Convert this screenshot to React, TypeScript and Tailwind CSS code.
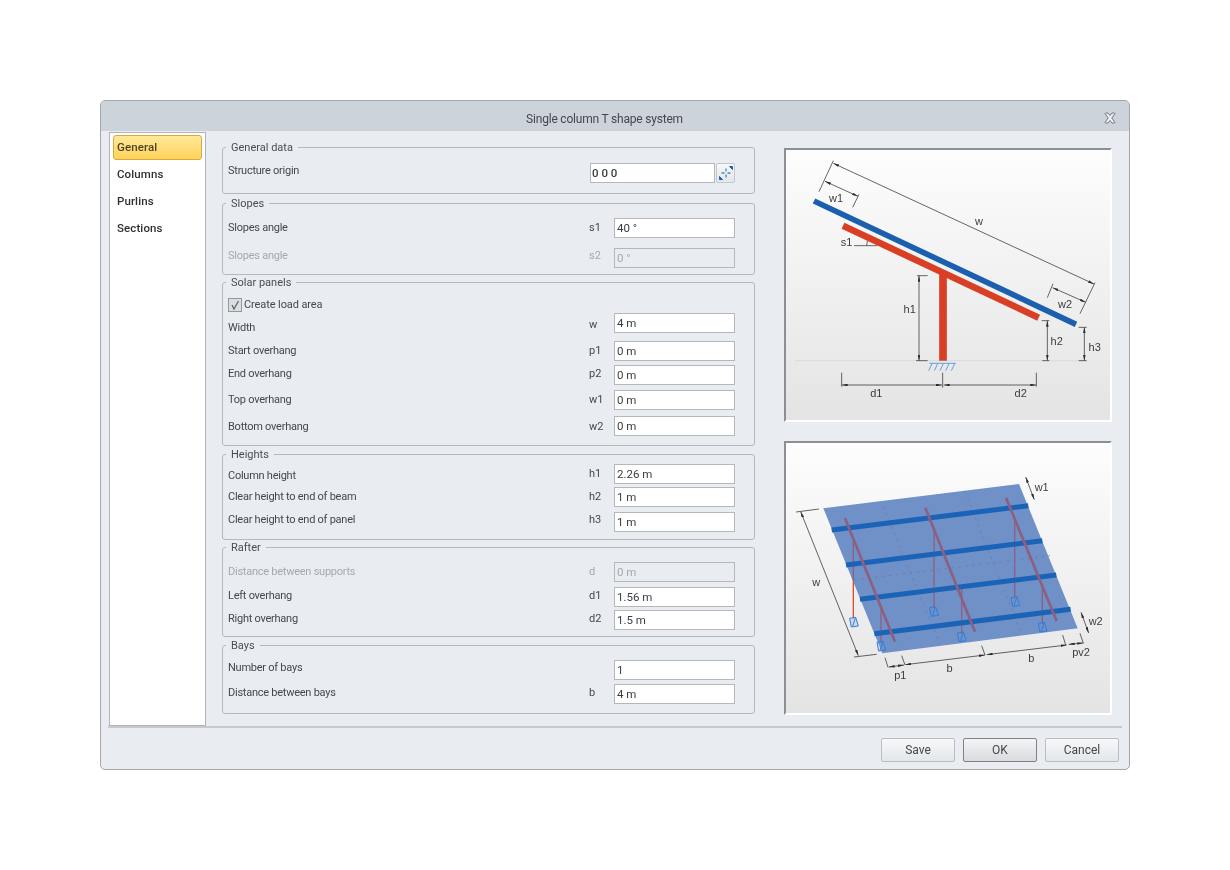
import type { ReactNode } from 'react'

const font = "font-['Roboto',sans-serif]"

interface GroupProps {
  title: string
  className: string
  children: ReactNode
}

function Group({ title, className, children }: GroupProps) {
  return (
    <div className={`relative border border-[#b4b9bf] rounded-[3px] ${className}`}>
      <span className="absolute -top-[8px] left-[3px] bg-[#e9ecf1] px-[5px] text-[11px] leading-[16px] text-[#4a4d50]">
        {title}
      </span>
      {children}
    </div>
  )
}

interface RowProps {
  label: string
  sym?: string
  value: string
  disabled?: boolean
  className: string
  labelClass?: string
  symClass?: string
}

function Row({ label, sym, value, disabled, className, labelClass = '', symClass = '' }: RowProps) {
  return (
    <div className={`flex items-center h-[20px] pl-[5px] ${className}`}>
      <span
        className={`w-[361px] text-[11px] tracking-[-0.25px] ${labelClass} ${disabled ? 'text-[#a6a9ac]' : 'text-[#45484b]'}`}
      >
        {label}
      </span>
      <span
        className={`w-[25px] text-[11px] ${symClass} ${disabled ? 'text-[#a6a9ac]' : 'text-[#45484b]'}`}
      >
        {sym}
      </span>
      <input
        readOnly
        value={value}
        className={`w-[121px] h-[20px] border border-[#b4b8bc] pl-[2px] text-[11.5px] outline-none ${disabled ? 'bg-[#e9ecf1] text-[#a6a9ac]' : 'bg-white text-[#3a3d40]'}`}
      />
    </div>
  )
}

function SideItem({ label, active }: { label: string; active?: boolean }) {
  return (
    <div
      className={`h-[25px] w-[89px] mb-[2px] flex items-center pl-[3px] text-[11.5px] font-medium tracking-[0.1px] ${active ? 'rounded-[3px] border border-[#d8a93f] bg-gradient-to-b from-[#ffe998] to-[#ffd257] text-[#4c4326]' : 'border border-transparent text-[#2d3033]'}`}
    >
      {label}
    </div>
  )
}

function FooterButton({ label, primary }: { label: string; primary?: boolean }) {
  return (
    <button
      className={`w-[74px] h-[24px] rounded-[2px] border text-[12px] text-[#45484b] bg-gradient-to-b ${primary ? 'border-[#7d8084] from-[#f3f4f5] to-[#d9dbde]' : 'border-[#b9bdc2] from-[#f7f8f9] to-[#e3e6ea]'}`}
    >
      {label}
    </button>
  )
}

function Arrows({ id }: { id: string }) {
  return (
    <defs>
      <marker id={id} viewBox="0 0 18 8" refX="18" refY="4" markerUnits="userSpaceOnUse" markerWidth="18" markerHeight="8" orient="auto-start-reverse">
        <path d="M0 0 L18 4 L0 8 Z" fill="#2c2c2c" />
      </marker>
    </defs>
  )
}

function SideDiagram() {
  const m = 'url(#a1)'
  return (
    <svg viewBox="18 165 972 810" className="block w-full h-full" fontFamily="'Liberation Sans',sans-serif" fontSize="33" fill="#3c3c3c">
      <Arrows id="a1" />
      <line x1="45" y1="797" x2="920" y2="797" stroke="#d2d2d2" strokeWidth="2" />
      <g stroke="#404040" strokeWidth="2.4" fill="none">
        <line x1="160" y1="205" x2="942" y2="567" markerStart={m} markerEnd={m} />
        <line x1="160" y1="197" x2="117" y2="290" />
        <line x1="945" y1="563" x2="900" y2="656" />
        <line x1="135" y1="259" x2="234" y2="304" markerStart={m} markerEnd={m} />
        <line x1="237" y1="298" x2="218" y2="337" />
        <line x1="819" y1="566" x2="802" y2="608" />
        <line x1="818" y1="578" x2="917" y2="622" markerStart={m} markerEnd={m} />
        <line x1="222" y1="452" x2="292" y2="452" />
        <line x1="262" y1="438" x2="260" y2="452" />
        <line x1="417" y1="542" x2="417" y2="797" markerStart={m} markerEnd={m} />
        <line x1="411" y1="542" x2="443" y2="542" />
        <line x1="408" y1="797" x2="443" y2="797" />
        <line x1="802" y1="677" x2="802" y2="797" markerStart={m} markerEnd={m} />
        <line x1="785" y1="677" x2="808" y2="677" />
        <line x1="787" y1="797" x2="808" y2="797" />
        <line x1="913" y1="697" x2="913" y2="797" markerStart={m} markerEnd={m} />
        <line x1="896" y1="697" x2="920" y2="697" />
        <line x1="896" y1="797" x2="920" y2="797" />
        <line x1="185" y1="870" x2="486" y2="870" markerStart={m} markerEnd={m} />
        <line x1="491" y1="870" x2="769" y2="870" markerStart={m} markerEnd={m} />
        <line x1="185" y1="833" x2="185" y2="875" />
        <line x1="488" y1="833" x2="488" y2="878" />
        <line x1="769" y1="833" x2="769" y2="875" />
      </g>
      <line x1="189" y1="392" x2="776" y2="668" stroke="#d83f25" strokeWidth="20" />
      <line x1="489" y1="530" x2="489" y2="797" stroke="#d83f25" strokeWidth="23" />
      <line x1="102" y1="318" x2="888" y2="688" stroke="#1b5fae" strokeWidth="17" />
      <g stroke="#4b8fdc" strokeWidth="2.5" fill="none">
        <line x1="448" y1="805" x2="527" y2="805" />
        <line x1="456" y1="806" x2="446" y2="827" />
        <line x1="473" y1="806" x2="463" y2="827" />
        <line x1="490" y1="806" x2="480" y2="827" />
        <line x1="507" y1="806" x2="497" y2="827" />
        <line x1="524" y1="806" x2="514" y2="827" />
      </g>
      <text x="168" y="321" textAnchor="middle">w1</text>
      <text x="597" y="389" textAnchor="middle">w</text>
      <text x="855" y="639" textAnchor="middle">w2</text>
      <text x="200" y="453" textAnchor="middle">s1</text>
      <text x="389" y="654" textAnchor="middle">h1</text>
      <text x="830" y="749" textAnchor="middle">h2</text>
      <text x="944" y="769" textAnchor="middle">h3</text>
      <text x="289" y="906" textAnchor="middle">d1</text>
      <text x="722" y="906" textAnchor="middle">d2</text>
    </svg>
  )
}

function PlanDiagram() {
  const m = 'url(#a2)'
  const bases = [
    [221, 562],
    [461, 530],
    [705, 500],
    [303, 634],
    [544, 606],
    [787, 577],
  ]
  return (
    <svg viewBox="18 24 972 810" className="block w-full h-full" fontFamily="'Liberation Sans',sans-serif" fontSize="33" fill="#3c3c3c">
      <Arrows id="a2" />
      <polygon points="130,220 717,147 893,580 307,655" fill="#7090c8" />
      <g stroke="#6880a8" strokeWidth="2.5" strokeDasharray="8 13" fill="none">
        <line x1="310" y1="215" x2="480" y2="628" />
        <line x1="555" y1="170" x2="722" y2="590" />
        <line x1="222" y1="435" x2="810" y2="362" />
      </g>
      <g stroke="#8d5f80" strokeWidth="4" fill="none">
        <line x1="220" y1="310" x2="220" y2="440" />
        <line x1="462" y1="280" x2="462" y2="520" />
        <line x1="704" y1="255" x2="704" y2="490" />
        <line x1="303" y1="515" x2="303" y2="622" />
        <line x1="545" y1="455" x2="545" y2="596" />
        <line x1="787" y1="460" x2="787" y2="566" />
      </g>
      <line x1="220" y1="440" x2="220" y2="550" stroke="#e2492f" strokeWidth="4" />
      <g stroke="#1b63b6" strokeWidth="15" fill="none">
        <line x1="155" y1="285" x2="745" y2="212" />
        <line x1="198" y1="390" x2="787" y2="317" />
        <line x1="240" y1="493" x2="829" y2="420" />
        <line x1="283" y1="596" x2="872" y2="523" />
      </g>
      <g stroke="#8d5f80" strokeWidth="8" fill="none">
        <line x1="195" y1="250" x2="345" y2="620" />
        <line x1="436" y1="218" x2="585" y2="590" />
        <line x1="678" y1="188" x2="830" y2="558" />
      </g>
      <g stroke="#2f7fdc" strokeWidth="3" fill="#7090c8" fillOpacity="0.2">
        {bases.map(([x, y]) => (
          <g key={`${x}-${y}`}>
            <polygon points={`${x - 12},${y - 12} ${x + 6},${y - 15} ${x + 14},${y + 11} ${x - 7},${y + 14}`} />
            <line x1={x - 3} y1={y + 12} x2={x + 5} y2={y - 13} />
          </g>
        ))}
      </g>
      <g stroke="#3c3c3c" strokeWidth="2.4" fill="none">
        <line x1="62" y1="230" x2="235" y2="662" markerStart={m} markerEnd={m} />
        <line x1="48" y1="231" x2="117" y2="222" />
        <line x1="222" y1="666" x2="290" y2="658" />
        <line x1="737" y1="126" x2="763" y2="194" markerStart={m} markerEnd={m} />
        <line x1="903" y1="532" x2="926" y2="594" markerStart={m} markerEnd={m} />
        <line x1="326" y1="696" x2="372" y2="690" markerStart={m} markerEnd={m} />
        <line x1="376" y1="689" x2="615" y2="660" markerStart={m} markerEnd={m} />
        <line x1="620" y1="659" x2="860" y2="630" markerStart={m} markerEnd={m} />
        <line x1="866" y1="628" x2="910" y2="624" markerStart={m} markerEnd={m} />
        <line x1="315" y1="668" x2="324" y2="697" />
        <line x1="365" y1="662" x2="375" y2="690" />
        <line x1="605" y1="632" x2="615" y2="660" />
        <line x1="848" y1="600" x2="857" y2="630" />
        <line x1="900" y1="595" x2="910" y2="625" />
      </g>
      <text x="785" y="167" textAnchor="middle">w1</text>
      <text x="947" y="569" textAnchor="middle">w2</text>
      <text x="109" y="454" textAnchor="middle">w</text>
      <text x="361" y="731" textAnchor="middle">p1</text>
      <text x="509" y="711" textAnchor="middle">b</text>
      <text x="754" y="681" textAnchor="middle">b</text>
      <text x="903" y="663" textAnchor="middle">pv2</text>
    </svg>
  )
}

function Panel({ className, children }: { className: string; children: ReactNode }) {
  return (
    <div
      className={`w-[328px] h-[274px] border-2 border-t-[#8b9096] border-l-[#8b9096] border-r-white border-b-white bg-gradient-to-b from-[#fdfdfd] to-[#e4e4e4] ${className}`}
    >
      {children}
    </div>
  )
}

export default function App() {
  return (
    <div className={`min-h-[870px] bg-white pt-[100px] pl-[100px] ${font}`}>
      <div className="w-[1030px] h-[670px] rounded-[5px] border border-[#a3a6aa] bg-[#e9ecf1] overflow-hidden blur-[0.35px]">
        <div className="relative h-[30px] pt-[6px] pr-[21px] bg-[#ccd3db] flex items-center justify-center text-[12px] tracking-[-0.2px] text-[#45484b]">
          Single column T shape system
          <svg viewBox="0 0 12 12" className="absolute right-[13px] top-[11px] w-[12px] h-[12px]">
            <path
              d="M1.5 1 L4 1 L6 3.5 L8 1 L10.5 1 L11 1.5 L7.8 6 L11 10.5 L10.5 11 L8 11 L6 8.5 L4 11 L1.5 11 L1 10.5 L4.2 6 L1 1.5 Z"
              fill="#eef0f3"
              stroke="#74797f"
            />
          </svg>
        </div>
        <div className="flex h-[595px] pl-[8px]">
          <div className="w-[97px] h-[594px] mt-[1px] border border-[#b0b4b9] bg-white pt-[2px] pl-[3px]">
            <SideItem label="General" active />
            <SideItem label="Columns" />
            <SideItem label="Purlins" />
            <SideItem label="Sections" />
          </div>
          <div className="ml-[16px] pt-[16px] w-[533px]">
            <Group title="General data" className="h-[47px]">
              <div className="flex items-center h-[20px] mt-[15px] pl-[5px]">
                <span className="w-[362px] text-[11px] tracking-[-0.25px] text-[#45484b] -translate-y-[2px]">
                  Structure origin
                </span>
                <input
                  readOnly
                  value="0 0 0"
                  className="w-[125px] h-[20px] border border-[#b4b8bc] bg-white pl-[1px] text-[11.5px] font-medium text-[#3a3d40] outline-none"
                />
                <button className="ml-[1px] w-[19px] h-[20px] flex items-center justify-center rounded-[2px] border border-[#c4c8cd] bg-gradient-to-b from-[#f7f8f9] to-[#e3e6ea]">
                  <svg viewBox="0 0 16 16" className="w-[16px] h-[16px]" fill="none" strokeWidth="1.3">
                    <path d="M11.5 1.5 L14.5 1.5 L14.5 4.5 Z" fill="#1f5fa8" stroke="#1f5fa8" strokeWidth="1" />
                    <path d="M1.5 11.5 L1.5 14.5 L4.5 14.5 Z" fill="#1f5fa8" stroke="#1f5fa8" strokeWidth="1" />
                    <path d="M8 3.5 L8 6.5 M8 9.5 L8 12.5 M3.5 8 L6.5 8 M9.5 8 L12.5 8" stroke="#4a86c4" />
                  </svg>
                </button>
              </div>
            </Group>
            <Group title="Slopes" className="h-[72px] mt-[9px]">
              <Row label="Slopes angle" sym="s1" value="40 °" className="mt-[14px]" />
              <Row
                label="Slopes angle"
                sym="s2"
                value="0 °"
                disabled
                className="mt-[10px]"
                labelClass="-translate-y-[2px]"
                symClass="-translate-y-[2px]"
              />
            </Group>
            <Group title="Solar panels" className="h-[164px] mt-[7px]">
              <label className="flex items-center h-[14px] mt-[15px] pl-[5px] text-[11px] tracking-[-0.1px] text-[#45484b]">
                <span className="w-[14px] h-[14px] mr-[2px] flex items-center justify-center border border-[#94989d] bg-[#dcdfe2]">
                  <svg viewBox="0 0 12 12" className="w-[12px] h-[12px]" fill="none" stroke="#666a6e" strokeWidth="1.4">
                    <path d="M3 6 L5 10 L9.5 2" />
                  </svg>
                </span>
                Create load area
              </label>
              <Row label="Width" sym="w" value="4 m" className="mt-[1px]" labelClass="translate-y-[5px]" symClass="translate-y-[2px]" />
              <Row label="Start overhang" sym="p1" value="0 m" className="mt-[8px]" />
              <Row label="End overhang" sym="p2" value="0 m" className="mt-[4px]" labelClass="-translate-y-[1px]" symClass="-translate-y-[1px]" />
              <Row label="Top overhang" sym="w1" value="0 m" className="mt-[5px]" />
              <Row label="Bottom overhang" sym="w2" value="0 m" className="mt-[6px]" labelClass="translate-y-[1px]" symClass="translate-y-[1px]" />
            </Group>
            <Group title="Heights" className="h-[86px] mt-[8px]">
              <Row label="Column height" sym="h1" value="2.26 m" className="mt-[9px]" labelClass="translate-y-[2px]" />
              <Row label="Clear height to end of beam" sym="h2" value="1 m" className="mt-[3px]" />
              <Row label="Clear height to end of panel" sym="h3" value="1 m" className="mt-[5px]" labelClass="-translate-y-[2px]" symClass="-translate-y-[2px]" />
            </Group>
            <Group title="Rafter" className="h-[90px] mt-[7px]">
              <Row label="Distance between supports" sym="d" value="0 m" disabled className="mt-[14px]" />
              <Row label="Left overhang" sym="d1" value="1.56 m" className="mt-[5px]" labelClass="-translate-y-[1px]" symClass="-translate-y-[1px]" />
              <Row label="Right overhang" sym="d2" value="1.5 m" className="mt-[3px]" labelClass="-translate-y-[1px]" symClass="-translate-y-[1px]" />
            </Group>
            <Group title="Bays" className="h-[69px] mt-[8px]">
              <Row label="Number of bays" value="1" className="mt-[14px]" labelClass="-translate-y-[2px]" />
              <Row label="Distance between bays" sym="b" value="4 m" className="mt-[4px]" labelClass="-translate-y-[1px]" symClass="-translate-y-[1px]" />
            </Group>
          </div>
          <div className="ml-[29px] pt-[17px]">
            <Panel className="">
              <SideDiagram />
            </Panel>
            <Panel className="mt-[19px]">
              <PlanDiagram />
            </Panel>
          </div>
        </div>
        <div className="ml-[7px] w-[1014px] border-t-2 border-[#c6cacf] flex justify-end gap-[8px] pt-[10px] pr-[3px]">
          <FooterButton label="Save" />
          <FooterButton label="OK" primary />
          <FooterButton label="Cancel" />
        </div>
      </div>
    </div>
  )
}
